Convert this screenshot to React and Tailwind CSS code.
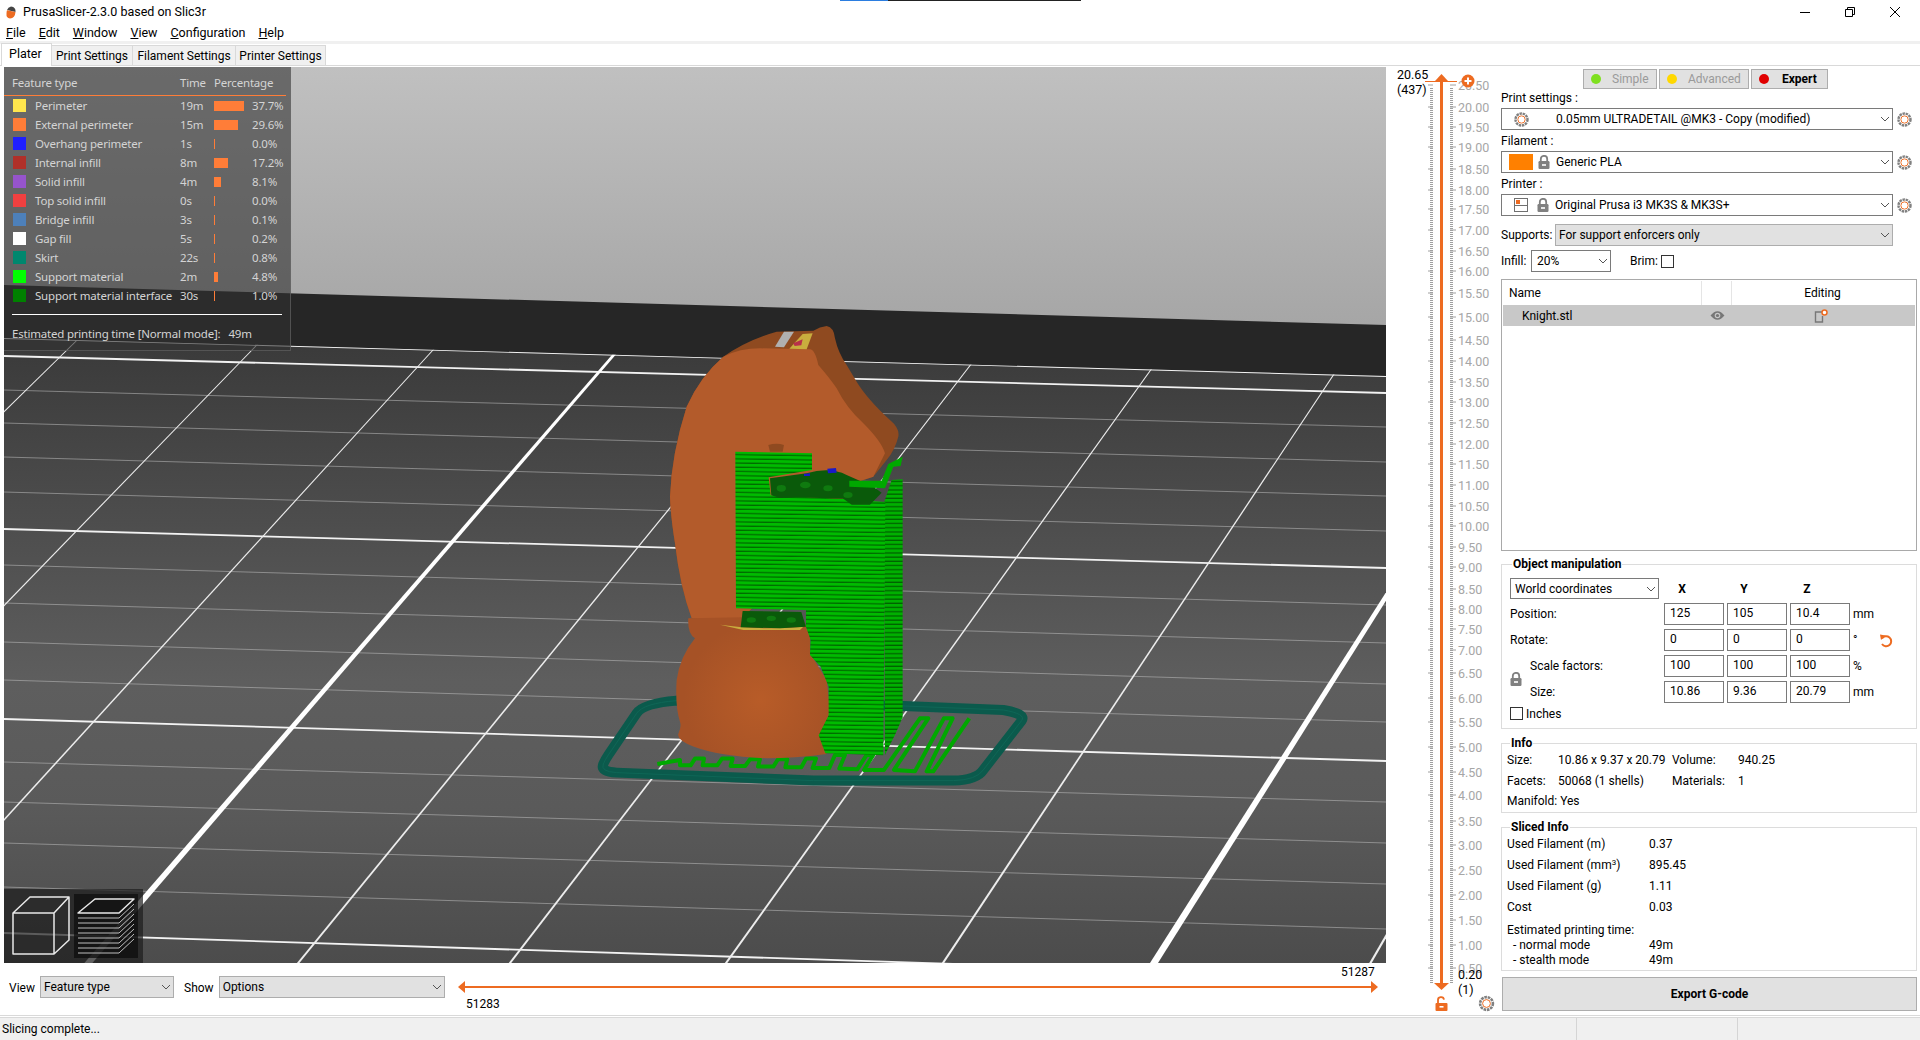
import React from "react";

const legendRows = [
  ["Perimeter", "19m", 30, "37.7%", "#ffe64d"],
  ["External perimeter", "15m", 24, "29.6%", "#ff7d38"],
  ["Overhang perimeter", "1s", 1, "0.0%", "#1f1fff"],
  ["Internal infill", "8m", 14, "17.2%", "#b03029"],
  ["Solid infill", "4m", 7, "8.1%", "#9654cc"],
  ["Top solid infill", "0s", 1, "0.0%", "#f04040"],
  ["Bridge infill", "3s", 1, "0.1%", "#4d80ba"],
  ["Gap fill", "5s", 1, "0.2%", "#ffffff"],
  ["Skirt", "22s", 1, "0.8%", "#00876e"],
  ["Support material", "2m", 4, "4.8%", "#00ff00"],
  ["Support material interface", "30s", 1, "1.0%", "#008000"],
];

// bed lines: y at the left edge of the canvas, y at the right edge
const bedMinor = [
  [390, 427], [423, 462], [457, 496], [492, 531], [565, 605], [603, 643],
  [642, 684], [680, 722], [762, 802], [802, 843], [843, 884], [887, 929],
];
const bedMajor = [[338, 376], [356, 393], [529, 568], [719, 761], [933, 978]];
// bed lines running away from the viewer: x at y=350, slope dx/dy
const bedCross = [
  [67, 1.02], [252, 0.97], [433, 0.913], [799, 0.817], [982, 0.77],
  [1165, 0.716], [1350, 0.664], [1726, 0.58],
];

const layerLabels = [
  ["20.50", 85], ["20.00", 107], ["19.50", 127], ["19.00", 147], ["18.50", 169],
  ["18.00", 190], ["17.50", 209], ["17.00", 230], ["16.50", 251], ["16.00", 271],
  ["15.50", 293], ["15.00", 317], ["14.50", 340], ["14.00", 361], ["13.50", 382],
  ["13.00", 402], ["12.50", 423], ["12.00", 444], ["11.50", 464], ["11.00", 485],
  ["10.50", 506], ["10.00", 526], ["9.50", 547], ["9.00", 567], ["8.50", 589],
  ["8.00", 609], ["7.50", 629], ["7.00", 650], ["6.50", 673], ["6.00", 698],
  ["5.50", 722], ["5.00", 747], ["4.50", 772], ["4.00", 795], ["3.50", 821],
  ["3.00", 845], ["2.50", 870], ["2.00", 895], ["1.50", 920], ["1.00", 945], ["0.50", 968],
];

const Chevron = () => (
  <svg width="10" height="6" viewBox="0 0 10 6" className="shrink-0">
    <path d="M1 1l4 4 4-4" fill="none" stroke="#555" strokeWidth="1" />
  </svg>
);

const Gear = ({ size = 15 }) => (
  <svg width={size} height={size} viewBox="0 0 16 16" className="shrink-0">
    <circle cx="8" cy="8" r="6.4" fill="none" stroke="#808080" strokeWidth="2.6" strokeDasharray="2.6 0.8" />
    <circle cx="8" cy="8" r="3.9" fill="#fff" stroke="#ed6b21" strokeWidth="1" />
  </svg>
);

const Lock = ({ color = "#808080", w = 12, h = 14 }) => (
  <svg width={w} height={h} viewBox="0 0 12 14" className="shrink-0">
    <path d="M2.8 6.5V4a3.2 3.2 0 0 1 6.4 0v2.5" fill="none" stroke={color} strokeWidth="1.8" />
    <rect x="0.5" y="6" width="11" height="8" rx="1.2" fill={color} />
    <rect x="4" y="9.2" width="4" height="1.6" fill="#fff" />
  </svg>
);

const Combo = ({ children, className = "" }) => (
  <div className={`flex items-center justify-between pr-[2px] border border-[#7a7a7a] bg-white h-[22px] ${className}`}>
    <div className="flex items-center min-w-0 whitespace-nowrap">{children}</div>
    <Chevron />
  </div>
);

const GrayCombo = ({ children, className = "" }) => (
  <div className={`flex items-center justify-between pl-[3px] pr-[2px] border border-[#adadad] bg-[#e1e1e1] h-[22px] whitespace-nowrap ${className}`}>
    <span>{children}</span>
    <Chevron />
  </div>
);

const ModeButton = ({ color, label, active, className }) => (
  <div className={`flex items-center h-[20px] border border-[#adadad] bg-[#e1e1e1] ${className}`}>
    <span className="ml-[7px] w-[10px] h-[10px] rounded-full" style={{ background: color }} />
    <span className={active ? "ml-[13px] font-bold text-black" : "ml-[11px] text-[#9a9a9a]"}>{label}</span>
  </div>
);

const NumField = ({ value }) => (
  <div className="h-[22px] border border-[#7a7a7a] bg-white pl-[5px] leading-[19px]">{value}</div>
);

const GroupBox = ({ title, titleClass, className = "", children }) => (
  <div className={`relative border border-[#dcdcdc] ${className}`}>
    <span className={`absolute top-[-10px] bg-white font-bold leading-[18px] px-[1px] ${titleClass}`}>{title}</span>
    {children}
  </div>
);

function Bed() {
  const crossPoints = (x350, k, w1, w2) => {
    const top = 340;
    const bottom = 963;
    const a = x350 - k * (top - 350);
    const b = x350 - k * (bottom - 350);
    return `${a - w1 / 2},${top} ${a + w1 / 2},${top} ${b + w2 / 2},${bottom} ${b - w2 / 2},${bottom}`;
  };
  const skirt =
    "M70 1362Q75 1350 85 1335L170 1210Q190 1180 290 1172L970 1188L1270 1200Q1340 1212 1325 1232L1210 1380Q1190 1410 1120 1412L700 1412L110 1388Q60 1385 70 1362Z";

  return (
    <svg viewBox="4 67 1382 896" className="absolute inset-0 w-full h-full">
      <defs>
        <linearGradient id="sky" gradientUnits="userSpaceOnUse" x1="0" y1="67" x2="0" y2="325">
          <stop offset="0" stopColor="#c0c0c0" />
          <stop offset="1" stopColor="#a6a6a6" />
        </linearGradient>
        <linearGradient id="plate" gradientUnits="userSpaceOnUse" x1="0" y1="340" x2="0" y2="963">
          <stop offset="0" stopColor="#3a3a3a" />
          <stop offset="0.55" stopColor="#5e5e5e" />
          <stop offset="0.75" stopColor="#5a5a5a" />
          <stop offset="1" stopColor="#4c4c4c" />
        </linearGradient>
        <clipPath id="plateClip">
          <path d="M4 338L1386 376V963H4Z" />
        </clipPath>
        <pattern id="supportLayers" patternUnits="userSpaceOnUse" width="12" height="12.6" patternTransform="rotate(0.9)">
          <rect width="12" height="12.6" fill="#00bb00" />
          <rect y="8.8" width="12" height="3.8" fill="#006a00" />
        </pattern>
        <pattern id="supportSide" patternUnits="userSpaceOnUse" width="12" height="12.6">
          <rect width="12" height="12.6" fill="#00b000" />
          <rect y="8.8" width="12" height="3.8" fill="#006000" />
        </pattern>
        <radialGradient id="baseGlow" gradientUnits="userSpaceOnUse" cx="540" cy="1170" r="230">
          <stop offset="0" stopColor="#b85c28" />
          <stop offset="1" stopColor="#a65226" />
        </radialGradient>
      </defs>

      <rect x="4" y="67" width="1382" height="300" fill="url(#sky)" />
      <path d="M4 285L1386 325V400H4Z" fill="#262626" />
      <path d="M4 338L1386 376V963H4Z" fill="url(#plate)" />

      <g clipPath="url(#plateClip)">
        {bedMinor.map(([a, b]) => (
          <line key={a} x1="4" y1={a} x2="1386" y2={b} stroke="#bdbdbd" strokeOpacity="0.55" strokeWidth="1" />
        ))}
        {bedMajor.map(([a, b]) => (
          <line key={a} x1="4" y1={a} x2="1386" y2={b} stroke="#f2f2f2" strokeWidth="1.8" />
        ))}
        {bedCross.map(([x, k]) => (
          <polygon key={x} points={crossPoints(x, k, 1.2, 2.5)} fill="#ededed" />
        ))}
        <polygon points={crossPoints(618, 0.864, 3.5, 8)} fill="#ffffff" />
        <polygon points={crossPoints(1542, 0.633, 3.5, 8)} fill="#ffffff" />
      </g>

      {/* the printed knight, drawn in coordinates three times the screen size */}
      <g transform="translate(580 310) scale(0.3333)">
        <path d={skirt} fill="none" stroke="#0b5a4c" strokeWidth="30" />
        <path d={skirt} fill="none" stroke="#0f6656" strokeWidth="3" />
        <path
          d="M232 1362L300 1350L300 1366L332 1366L345 1346L372 1346L368 1366L412 1366L426 1346L458 1346L452 1368L496 1368L510 1348L540 1348L534 1370L580 1370L594 1348L622 1348L616 1372L664 1372L678 1346L708 1346L698 1374L748 1374L765 1335L795 1335L778 1376L832 1378L860 1335L880 1335L852 1380L912 1380L1020 1225L1045 1225L942 1380L1005 1384L1092 1225L1118 1225L1040 1384L1060 1384L1168 1225"
          fill="none"
          stroke="#00a800"
          strokeWidth="12"
          strokeLinejoin="round"
        />

        {/* head and neck */}
        <path
          d="M270 560Q275 430 320 290Q360 200 430 140Q500 90 590 65L700 62Q720 50 740 48Q762 52 765 85Q775 130 800 165L830 215Q860 265 930 330Q960 355 955 380Q945 420 920 450L880 500L820 520L700 700L478 935L335 925Q300 830 285 700Q272 620 270 560Z"
          fill="#8f4a20"
        />
        <path
          d="M270 560Q275 430 320 290Q360 200 430 140Q480 115 540 115L690 118Q705 118 715 165Q750 205 770 235Q800 295 850 340Q905 395 915 430L880 500L820 520L700 700L478 935L335 925Q300 830 285 700Q272 620 270 560Z"
          fill="#b35b2b"
        />
        <path d="M585 110L612 65L642 65L612 112Z" fill="#b0b0b0" />
        <path d="M628 116L668 72L698 70L680 118Z" fill="#c9ad3e" />
        <path d="M640 100L668 88L664 106L644 108Z" fill="#b8304a" />
        <path d="M565 405Q590 398 612 405L608 425L570 425Z" fill="#8f4a20" />

        {/* base */}
        <path
          d="M325 925L480 922L670 930L690 980L690 1030L740 1110L750 1200L730 1290L740 1332Q640 1345 560 1345Q420 1340 340 1310Q290 1290 295 1272Q305 1250 300 1235Q285 1190 290 1110Q300 1040 345 985Q322 970 325 925Z"
          fill="url(#baseGlow)"
        />
        <path d="M420 944Q540 962 670 950L660 960L490 960Z" fill="#c9ad3e" />

        {/* support tower */}
        <path d="M912 578L935 510L968 508V1222L945 1275L915 1335Z" fill="url(#supportSide)" />
        <path
          d="M466 425L696 430V480L566 502L572 556L780 566L916 576L910 1336L736 1330L716 1276L746 1216L746 1130L722 1070L690 1035L692 990L678 950L678 900L468 895Z"
          fill="url(#supportLayers)"
        />
        <path
          d="M570 505L680 490Q750 470 800 495L880 530L905 548L870 584L815 584L790 566L650 562L600 564L574 556Z"
          fill="#0a5a0a"
        />
        <path d="M488 903L664 906L678 950L600 955L482 952Z" fill="#0a5a0a" />
        <path d="M590 535a14 10 0 1 0 28 0a14 10 0 1 0 -28 0M660 525a16 10 0 1 0 32 0a16 10 0 1 0 -32 0M730 535a14 9 0 1 0 28 0a14 9 0 1 0 -28 0M790 555a14 9 0 1 0 28 0a14 9 0 1 0 -28 0" fill="#0f7a0f" />
        <path d="M500 930a14 8 0 1 0 28 0a14 8 0 1 0 -28 0M560 925a14 8 0 1 0 28 0a14 8 0 1 0 -28 0M620 930a14 8 0 1 0 28 0a14 8 0 1 0 -28 0" fill="#0f7a0f" />
        <path d="M742 476L768 474L770 488L744 490Z" fill="#1a1ac8" />
        <path d="M672 492L690 490L690 498L672 498Z" fill="#1a1ac8" />
        <path d="M808 512L905 512L925 462L968 440L962 468L940 470L925 510L915 535L808 530Z" fill="#00a800" />
      </g>
    </svg>
  );
}

function Legend() {
  return (
    <div className="absolute left-0 top-0 w-[287px] h-[284px] bg-[#313131]/60 border-r border-b border-[#6a6a6a]/60 text-[#d4d4d4] text-[11.5px] font-['Noto_Sans',sans-serif] tracking-[-0.2px]">
      <div className="grid grid-cols-[168px_34px_1fr] pl-[8px] pt-[3px] h-[29px] items-center mr-[4px] border-b border-[#ff7d38]">
        <span>Feature type</span>
        <span>Time</span>
        <span>Percentage</span>
      </div>
      <div className="flex flex-col ml-[9px]">
        {legendRows.map(([name, time, bar, pct, color]) => (
          <div key={name} className="grid grid-cols-[167px_34px_38px_1fr] h-[19px] items-center">
            <div className="flex items-center">
              <span className="w-[13px] h-[13px] mr-[9px] shrink-0" style={{ background: color }} />
              <span className="whitespace-nowrap">{name}</span>
            </div>
            <span>{time}</span>
            <span className="h-[10px] bg-[#ff7d38]" style={{ width: bar }} />
            <span>{pct}</span>
          </div>
        ))}
      </div>
      <div className="mt-[9px] mx-[8px] border-t border-white" />
      <div className="flex mt-[10px] ml-[8px] whitespace-nowrap">
        <span>Estimated printing time [Normal mode]:</span>
        <span className="ml-[8px]">49m</span>
      </div>
    </div>
  );
}

function ViewToggle() {
  const layerYs = [918, 923, 928, 933, 938, 943, 948, 953];
  return (
    <div className="absolute left-0 bottom-0 w-[139px] h-[74px] bg-[#1c1c1c]/70">
      <svg viewBox="4 889 139 74" className="w-full h-full">
        <rect x="74" y="894" width="64" height="64" fill="#0e0e0e" fillOpacity="0.75" />
        <g fill="none" stroke="#e8e8e8" strokeWidth="1.5" strokeLinejoin="round">
          <path d="M13 913H54V954H13ZM13 913L30 897H69L54 913M69 897V940L54 954" />
          <path d="M78 913L95 899H134L119 913Z" />
        </g>
        <g fill="none" stroke="#bdbdbd" strokeWidth="1">
          {layerYs.map((y) => (
            <path key={y} d={`M78 ${y}H119L134 ${y - 14}`} />
          ))}
        </g>
      </svg>
    </div>
  );
}

function LayerSlider() {
  return (
    <svg viewBox="1386 66 111 950" className="w-[111px] h-[950px] shrink-0">
      <line x1="1431.5" y1="88" x2="1431.5" y2="983" stroke="#a0a0a0" strokeWidth="3" strokeDasharray="1 1" />
      <line x1="1451.5" y1="88" x2="1451.5" y2="983" stroke="#a0a0a0" strokeWidth="3" strokeDasharray="1 1" />
      {layerLabels.map(([label, y]) => (
        <g key={label}>
          <line x1="1428" y1={y} x2="1433" y2={y} stroke="#a0a0a0" />
          <line x1="1450" y1={y} x2="1456" y2={y} stroke="#a0a0a0" />
          <text x="1458" y={y + 4.5} fontSize="12.5" fill="#a6a6a6">{label}</text>
        </g>
      ))}
      <rect x="1440" y="80" width="3" height="904" fill="#ed6b21" />
      <path d="M1441.5 74L1448 81H1435Z" fill="#ed6b21" />
      <line x1="1425" y1="81.5" x2="1457" y2="81.5" stroke="#ed6b21" />
      <path d="M1434 983H1449L1441.5 990Z" fill="#ed6b21" />
      <circle cx="1468" cy="81" r="6.5" fill="#ed6b21" />
      <path d="M1468 77.5V84.5M1464.5 81H1471.5" stroke="#fff" strokeWidth="2" />
      <text x="1397" y="79" fontSize="12.5" fill="#000">20.65</text>
      <text x="1397" y="94" fontSize="12.5" fill="#000">(437)</text>
      <text x="1458" y="979" fontSize="12.5" fill="#000">0.20</text>
      <text x="1458" y="994" fontSize="12.5" fill="#000">(1)</text>
      <g transform="translate(1435.5 997)">
        <path d="M2.5 6V3.5a3 3 0 0 1 6-.8" fill="none" stroke="#ed6b21" strokeWidth="1.8" />
        <rect x="0" y="6" width="12" height="8" rx="1" fill="#ed6b21" />
        <rect x="4" y="9" width="4" height="1.6" fill="#fff" />
      </g>
      <g transform="translate(1478.5 995.5)">
        <circle cx="8" cy="8" r="6.4" fill="none" stroke="#808080" strokeWidth="2.6" strokeDasharray="2.6 0.8" />
        <circle cx="8" cy="8" r="3.9" fill="#fff" stroke="#ed6b21" strokeWidth="1" />
      </g>
    </svg>
  );
}

function MoveSlider() {
  return (
    <svg viewBox="450 966 936 44" className="w-[936px] h-[44px]">
      <line x1="460" y1="987" x2="1376" y2="987" stroke="#ed6b21" strokeWidth="2" />
      <path d="M458 987L465 981V993Z" fill="#ed6b21" />
      <path d="M1378 987L1371 981V993Z" fill="#ed6b21" />
      <text x="466" y="1008" fontSize="12" fill="#000">51283</text>
      <text x="1341" y="976" fontSize="12" fill="#000">51287</text>
    </svg>
  );
}

function ObjectManipulation() {
  return (
    <GroupBox title="Object manipulation" titleClass="left-[10px]" className="h-[165px] mt-[13px] pl-[8px] pt-[13px]">
      <div className="grid grid-cols-[17px_131px_60px_60px_60px_1fr] gap-x-[3px] gap-y-[4px] items-center">
        <div className="col-span-2">
          <Combo className="w-[149px] pl-[4px] !h-[21px]">World coordinates</Combo>
        </div>
        <span className="font-bold text-center pr-[24px]">X</span>
        <span className="font-bold text-center pr-[26px]">Y</span>
        <span className="font-bold text-center pr-[26px]">Z</span>
        <span />

        <span className="col-span-2">Position:</span>
        <NumField value="125" />
        <NumField value="105" />
        <NumField value="10.4" />
        <span>mm</span>

        <span className="col-span-2">Rotate:</span>
        <NumField value="0" />
        <NumField value="0" />
        <NumField value="0" />
        <div className="flex items-center gap-[22px]">
          <span>°</span>
          <svg width="14" height="15" viewBox="0 0 14 15">
            <path d="M3 5.5A5 5 0 1 1 3 11" fill="none" stroke="#ed6b21" strokeWidth="2" />
            <path d="M1 1.5L6.5 2.5L2 7Z" fill="#ed6b21" />
          </svg>
        </div>

        <div className="row-span-2 flex items-center">
          <Lock />
        </div>
        <span>Scale factors:</span>
        <NumField value="100" />
        <NumField value="100" />
        <NumField value="100" />
        <span>%</span>

        <span>Size:</span>
        <NumField value="10.86" />
        <NumField value="9.36" />
        <NumField value="20.79" />
        <span>mm</span>
      </div>
      <div className="flex items-center mt-[4px] h-[13px]">
        <span className="w-[13px] h-[13px] border border-[#333] bg-white" />
        <span className="ml-[3px]">Inches</span>
      </div>
    </GroupBox>
  );
}

function SlicedInfo() {
  const rows = [
    [<>Used Filament (m)</>, "0.37", "h-[21px]"],
    [<>Used Filament (mm<sup className="text-[8px]">3</sup>)</>, "895.45", "h-[21px]"],
    [<>Used Filament (g)</>, "1.11", "h-[21px]"],
    [<>Cost</>, "0.03", "h-[21px]"],
    [<>Estimated printing time:</>, "", "h-[15px] mt-[5px]"],
    [<>&nbsp;&nbsp;- normal mode</>, "49m", "h-[15px]"],
    [<>&nbsp;&nbsp;- stealth mode</>, "49m", "h-[15px]"],
  ];
  return (
    <GroupBox title="Sliced Info" titleClass="left-[8px]" className="h-[144px] mt-[14px] pl-[5px] pt-[5px]">
      {rows.map(([label, value, rowClass], i) => (
        <div key={i} className={`grid grid-cols-[142px_1fr] items-center leading-none ${rowClass}`}>
          <span>{label}</span>
          <span>{value}</span>
        </div>
      ))}
    </GroupBox>
  );
}

function SidePanel() {
  return (
    <div className="w-[416px] shrink-0 ml-[4px] flex flex-col">
      <div className="flex gap-[2px] pl-[82px] mt-[3px] h-[20px]">
        <ModeButton color="#7fe01f" label="Simple" className="w-[74px]" />
        <ModeButton color="#ffd800" label="Advanced" className="w-[90px]" />
        <ModeButton color="#e00000" label="Expert" active className="w-[77px]" />
      </div>

      <div className="h-[19px] leading-[19px]">Print settings :</div>
      <div className="flex items-center">
        <Combo className="w-[392px]">
          <span className="ml-[12px] mr-[27px]"><Gear /></span>
          0.05mm ULTRADETAIL @MK3 - Copy (modified)
        </Combo>
        <span className="ml-[4px]"><Gear /></span>
      </div>

      <div className="h-[21px] leading-[23px]">Filament :</div>
      <div className="flex items-center">
        <Combo className="w-[392px]">
          <span className="ml-[7px] w-[24px] h-[16px] bg-[#ff8000]" />
          <span className="ml-[5px] mr-[6px]"><Lock /></span>
          Generic PLA
        </Combo>
        <span className="ml-[4px]"><Gear /></span>
      </div>

      <div className="h-[21px] leading-[23px]">Printer :</div>
      <div className="flex items-center">
        <Combo className="w-[392px]">
          <svg width="14" height="14" viewBox="0 0 14 14" className="ml-[12px]">
            <rect x="0.5" y="0.5" width="13" height="13" fill="#fff" stroke="#707070" />
            <line x1="0.5" y1="7.5" x2="13.5" y2="7.5" stroke="#707070" />
            <rect x="2" y="2" width="4" height="4" fill="#ed6b21" />
          </svg>
          <span className="ml-[9px] mr-[6px]"><Lock /></span>
          Original Prusa i3 MK3S &amp; MK3S+
        </Combo>
        <span className="ml-[4px]"><Gear /></span>
      </div>

      <div className="flex items-center mt-[8px]">
        <span className="w-[54px]">Supports:</span>
        <GrayCombo className="w-[338px]">For support enforcers only</GrayCombo>
      </div>

      <div className="flex items-center mt-[4px]">
        <span className="w-[30px]">Infill:</span>
        <Combo className="w-[80px] pl-[5px]">20%</Combo>
        <span className="ml-[19px]">Brim:</span>
        <span className="ml-[3px] w-[13px] h-[13px] border border-[#333] bg-white" />
      </div>

      <div className="mt-[7px] h-[272px] border border-[#a9a9a9] p-[1px]">
        <div className="grid grid-cols-[199px_30px_1fr] h-[24px] items-center">
          <span className="pl-[6px] h-full leading-[24px] border-r border-[#e5e5e5]">Name</span>
          <span className="h-full border-r border-[#e5e5e5]" />
          <span className="text-center pr-[2px]">Editing</span>
        </div>
        <div className="grid grid-cols-[199px_30px_1fr] h-[21px] items-center bg-[#c8c8c8]">
          <span className="pl-[19px]">Knight.stl</span>
          <span className="flex justify-center pl-[1px]">
            <svg width="15" height="11" viewBox="0 0 14 10">
              <path d="M0.5 5Q7 -3 13.5 5Q7 13 0.5 5Z" fill="#777" />
              <circle cx="7" cy="5" r="2.6" fill="#c8c8c8" />
              <circle cx="7" cy="5" r="1.5" fill="#777" />
            </svg>
          </span>
          <span className="flex justify-center pr-[6px]">
            <svg width="14" height="14" viewBox="0 0 14 14">
              <path d="M8 3H1.5V13H8.5V7" fill="none" stroke="#777" strokeWidth="1.4" />
              <circle cx="10.5" cy="3.5" r="2.5" fill="#fff" stroke="#ed6b21" strokeWidth="1.5" />
            </svg>
          </span>
        </div>
      </div>

      <ObjectManipulation />

      <GroupBox title="Info" titleClass="left-[8px]" className="h-[70px] mt-[14px] pl-[5px] pt-[6px]">
        <div className="grid grid-cols-[51px_114px_66px_1fr] auto-rows-[20.5px] items-center whitespace-nowrap">
          <span>Size:</span>
          <span>10.86 x 9.37 x 20.79</span>
          <span>Volume:</span>
          <span>940.25</span>
          <span>Facets:</span>
          <span>50068 (1 shells)</span>
          <span>Materials:</span>
          <span>1</span>
          <span className="col-span-4">Manifold: Yes</span>
        </div>
      </GroupBox>

      <SlicedInfo />

      <div className="mt-[6px] ml-[1px] h-[34px] flex items-center justify-center border border-[#adadad] bg-[#e1e1e1] font-bold">
        Export G-code
      </div>
    </div>
  );
}

export default function App() {
  const menus = [
    ["F", "ile"], ["E", "dit"], ["W", "indow"], ["V", "iew"], ["C", "onfiguration"], ["H", "elp"],
  ];
  return (
    <div className="relative w-[1920px] h-[1040px] overflow-hidden bg-white text-black text-[12px] font-['Roboto',sans-serif] flex flex-col">
      {/* thin progress strip along the top of the window */}
      <div className="absolute top-0 left-[840px] w-[241px] h-px flex">
        <div className="w-[48px] bg-[#2b7de0]" />
        <div className="flex-1 bg-[#222]" />
      </div>

      <div className="h-[24px] flex items-center shrink-0 pl-[6px] pr-[20px]">
        <svg width="10" height="13" viewBox="0 0 10 13">
          <path d="M5 0.5Q10 1 9.5 6L1 4Q2 1 5 0.5Z" fill="#444" />
          <path d="M1 4.2L9.5 6Q9 12 4 12.5Q0 12 0.5 7.5Q0.5 5.5 1 4.2Z" fill="#ed6b21" />
        </svg>
        <span className="ml-[7px] text-[12.5px]">PrusaSlicer-2.3.0 based on Slic3r</span>
        <div className="ml-auto flex items-center gap-[35px]">
          <svg width="10" height="10" viewBox="0 0 10 10">
            <line x1="0" y1="5.5" x2="10" y2="5.5" stroke="#000" />
          </svg>
          <svg width="10" height="10" viewBox="0 0 10 10">
            <path d="M0.5 2.5H7.5V9.5H0.5ZM2.5 2.5V0.5H9.5V7.5H7.5" fill="none" stroke="#000" />
          </svg>
          <svg width="10" height="10" viewBox="0 0 10 10">
            <path d="M0 0L10 10M10 0L0 10" fill="none" stroke="#000" />
          </svg>
        </div>
      </div>

      <div className="h-[17px] flex items-center shrink-0 pl-[6px] pt-[2px] gap-[13px] text-[12.5px] leading-none">
        {menus.map(([first, rest]) => (
          <span key={first}>
            <span className="underline">{first}</span>
            {rest}
          </span>
        ))}
      </div>

      <div className="h-[3px] bg-[#f0f0f0] shrink-0" />

      <div className="h-[22px] flex items-end shrink-0 border-b border-[#d9d9d9] pl-[1px]">
        <div className="w-[51px] h-[23px] pl-[7px] leading-[19px] border-t border-x border-[#d9d9d9] bg-white relative top-[1px] text-[12.5px]">
          Plater
        </div>
        <div className="w-[81px] h-[20px] border-t border-r border-[#d9d9d9] bg-[#f0f0f0] text-center leading-[20px]">Print Settings</div>
        <div className="w-[103px] h-[20px] border-t border-r border-[#d9d9d9] bg-[#f0f0f0] text-center leading-[20px]">Filament Settings</div>
        <div className="w-[90px] h-[20px] border-t border-r border-[#d9d9d9] bg-[#f0f0f0] text-center leading-[20px]">Printer Settings</div>
      </div>

      <div className="flex h-[950px] shrink-0 border-b border-[#d9d9d9]">
        <div className="w-[1386px] shrink-0 pl-[4px] flex flex-col">
          <div className="relative h-[896px] mt-[1px]">
            <Bed />
            <Legend />
            <ViewToggle />
          </div>
          <div className="flex items-start h-[46px] pl-[5px]">
            <span className="mt-[16px]">View</span>
            <GrayCombo className="w-[135px] ml-[5px] mt-[13px]">Feature type</GrayCombo>
            <span className="ml-[10px] mt-[16px]">Show</span>
            <GrayCombo className="w-[228px] ml-[5px] mt-[13px]">Options</GrayCombo>
            <div className="ml-[5px] mt-[3px]">
              <MoveSlider />
            </div>
          </div>
        </div>
        <LayerSlider />
        <SidePanel />
      </div>

      <div className="flex-1 mt-px bg-[#f0f0f0] border-t border-[#d9d9d9] flex items-center">
        <span className="w-[1577px] pl-[2px] h-full flex items-center border-r border-[#d5d5d5]">Slicing complete...</span>
        <span className="w-[161px] h-full border-r border-[#d5d5d5]" />
      </div>
    </div>
  );
}
